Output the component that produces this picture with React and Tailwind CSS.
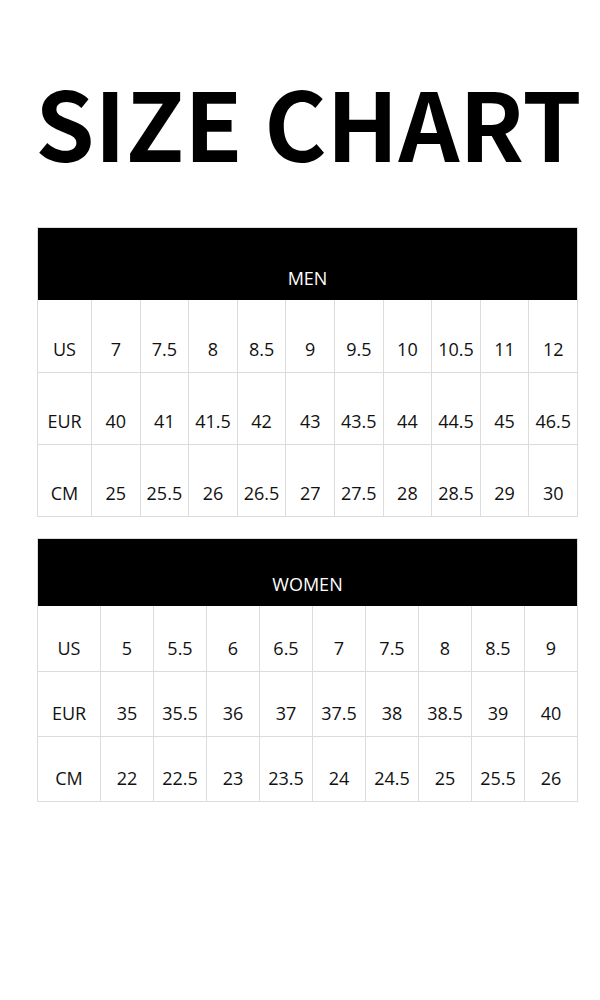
const MEN = [
  ["US", "7", "7.5", "8", "8.5", "9", "9.5", "10", "10.5", "11", "12"],
  ["EUR", "40", "41", "41.5", "42", "43", "43.5", "44", "44.5", "45", "46.5"],
  ["CM", "25", "25.5", "26", "26.5", "27", "27.5", "28", "28.5", "29", "30"],
];

const WOMEN = [
  ["US", "5", "5.5", "6", "6.5", "7", "7.5", "8", "8.5", "9"],
  ["EUR", "35", "35.5", "36", "37", "37.5", "38", "38.5", "39", "40"],
  ["CM", "22", "22.5", "23", "23.5", "24", "24.5", "25", "25.5", "26"],
];

function SizeTable({ title, rows, cols, headerH, rowH }) {
  return (
    <div className="border border-[#dcdcdc]">
      <div className={`flex items-end justify-center bg-black pb-[10px] text-white ${headerH}`}>
        <span className="text-[18px] leading-6">{title}</span>
      </div>
      {rows.map((row, i) => (
        <div key={i} className={`grid ${cols} ${rowH} ${i > 0 ? "border-t border-[#dcdcdc]" : ""}`}>
          {row.map((cell, j) => (
            <div
              key={j}
              className={`flex items-end justify-center pb-[11px] ${j > 0 ? "border-l border-[#dcdcdc]" : ""}`}
            >
              <span className="whitespace-nowrap text-[18px] leading-6 text-[#111]">{cell}</span>
            </div>
          ))}
        </div>
      ))}
    </div>
  );
}

export default function App() {
  return (
    <div className="h-[1000px] w-[600px] bg-white font-['Open_Sans',sans-serif]">
      <div className="flex justify-center pl-[17px] pt-[71px]">
        <h1 className="font-['Noto_Sans_CJK_SC',sans-serif] text-[95px] font-bold leading-[100px] text-black">
          SIZE CHART
        </h1>
      </div>

      <div className="mx-[37px] mt-[56px] w-[541px]">
        <SizeTable
          title="MEN"
          rows={MEN}
          cols="grid-cols-[53px_repeat(10,1fr)]"
          headerH="h-[72px]"
          rowH="h-[72px]"
        />
      </div>

      <div className="mx-[37px] mt-[21px] w-[541px]">
        <SizeTable
          title="WOMEN"
          rows={WOMEN}
          cols="grid-cols-[62px_repeat(9,1fr)]"
          headerH="h-[67px]"
          rowH="h-[65px]"
        />
      </div>
    </div>
  );
}
